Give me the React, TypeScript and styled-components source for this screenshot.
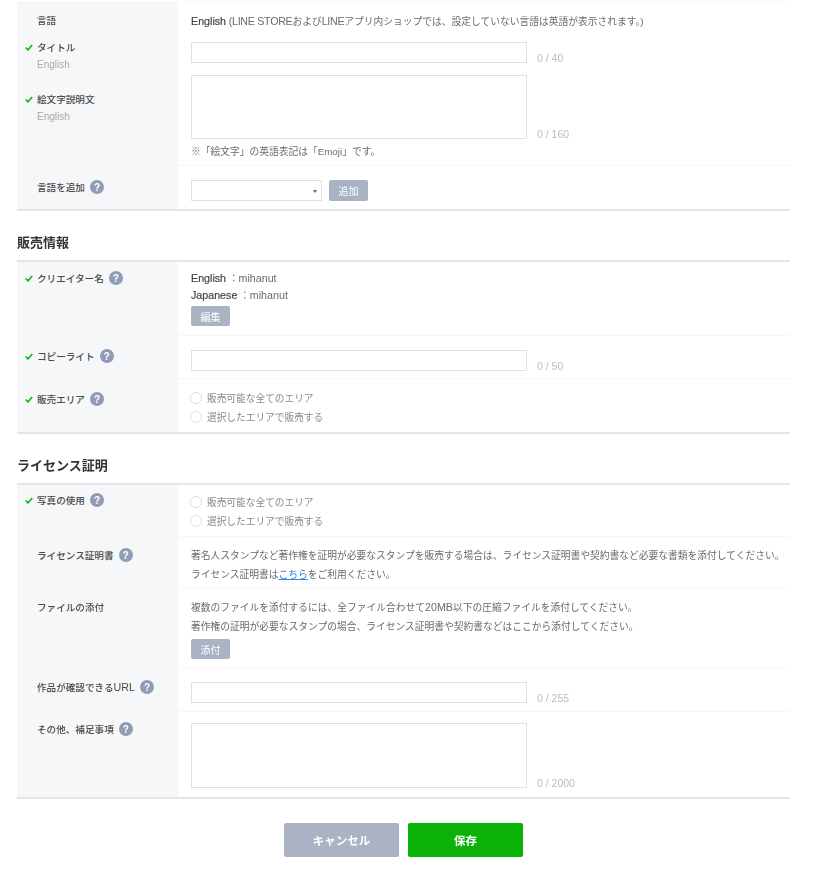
import React from "react";
import styled, { createGlobalStyle } from "styled-components";

const Global = createGlobalStyle`
  html, body { margin: 0; padding: 0; background: #fff; }
  body { font-family: "Liberation Sans", "Noto Sans CJK JP", sans-serif; font-size: 10px; color: #555; }
`;

const Page = styled.div`
  width: 773px;
  margin-left: 17px;
  padding-top: 1px;
  filter: blur(0.35px);
`;

const Table = styled.div<{ $top?: boolean }>`
  border-top: ${(p) => (p.$top ? "1px solid #f7f8fa" : "2px solid #e3e5ea")};
  border-bottom: 2px solid #e3e5ea;
`;

const Row = styled.div<{ $h: number; $plain?: boolean }>`
  display: grid;
  grid-template-columns: 161px 1fr;
  height: ${(p) => p.$h}px;
  box-sizing: border-box;
  border-bottom: ${(p) => (p.$plain ? "none" : "1px solid #f6f7f8")};
  &:last-child { border-bottom: none; }
`;

const Label = styled.div<{ $pt: number }>`
  position: relative;
  background: #f6f7f9;
  padding: ${(p) => p.$pt}px 0 0 20px;
`;

const LabelLine = styled.div`
  display: flex;
  align-items: center;
  gap: 5px;
  height: 14px;
  font-size: 9.6px;
  font-weight: 500;
  color: #4a4a4a;
`;

const Sub = styled.div`
  font-size: 10px;
  line-height: 14px;
  margin-top: 4px;
  color: #aaa;
`;

const Check = styled.svg`
  position: absolute;
  left: 8px;
  width: 8px;
  height: 7px;
  margin-top: 4px;
`;

const HelpDot = styled.span`
  display: inline-flex;
  align-items: center;
  justify-content: center;
  width: 14px;
  height: 14px;
  border-radius: 50%;
  background: #909cb5;
  color: #fff;
  font-size: 10px;
  font-weight: 700;
`;

const Content = styled.div<{ $pt: number }>`
  padding: ${(p) => p.$pt}px 0 0 13px;
`;

const FieldLine = styled.div`
  display: flex;
  align-items: flex-end;
  gap: 10px;
`;

const TextInput = styled.div`
  width: 336px;
  height: 21px;
  box-sizing: border-box;
  border: 1px solid #e0e0e0;
  background: #fff;
`;

const TextArea = styled(TextInput)<{ $h: number }>`
  height: ${(p) => p.$h}px;
`;

const Counter = styled.span`
  font-size: 10.5px;
  line-height: 12px;
  color: #bbb;
  margin-bottom: -1px;
`;

const Text = styled.div<{ $lh?: number }>`
  font-size: 9.75px;
  line-height: ${(p) => p.$lh ?? 18}px;
  color: #6a6a6a;
  white-space: nowrap;
`;

const Latin = styled.span`
  font-size: 10.7px;
`;

const TightLatin = styled(Latin)`
  letter-spacing: -0.3px;
`;

const Strong = styled(Latin)`
  color: #444;
  font-weight: 500;
  -webkit-text-stroke: 0.2px #444;
`;

const Note = styled(Text)`
  margin-top: 4px;
`;

const SmallButton = styled.div`
  display: flex;
  align-items: center;
  justify-content: center;
  width: 39px;
  height: 21px;
  border-radius: 2px;
  background: #a9b3c4;
  color: #fff;
  font-size: 10px;
`;

const EditButton = styled(SmallButton)`
  margin-top: 2px;
  height: 20px;
`;

const AttachButton = styled(SmallButton)`
  margin-top: 3px;
  height: 20px;
`;

const AddLine = styled.div`
  display: flex;
  gap: 7px;
`;

const SelectBox = styled.div`
  position: relative;
  width: 131px;
  height: 21px;
  box-sizing: border-box;
  border: 1px solid #e0e0e0;
`;

const Caret = styled.span`
  position: absolute;
  right: 4px;
  top: 9px;
  border-left: 2px solid transparent;
  border-right: 2px solid transparent;
  border-top: 3px solid #667;
`;

const Heading = styled.h2`
  margin: 23px 0 0;
  height: 26px;
  font-size: 13px;
  line-height: 18px;
  font-weight: 700;
  color: #333;
`;

const RadioLine = styled.div`
  display: flex;
  align-items: center;
  gap: 5px;
  height: 19px;
  color: #888;
  font-size: 9.7px;
`;

const RadioDot = styled.span`
  width: 12px;
  height: 12px;
  margin-left: -1px;
  box-sizing: border-box;
  border-radius: 50%;
  border: 1px solid #e0e0e0;
  background: #fff;
`;

const TextLink = styled.a`
  color: #2a86e8;
  text-decoration: underline;
`;

const Actions = styled.div`
  display: flex;
  justify-content: center;
  gap: 9px;
  margin: 24px 0 0;
`;

const ActionButton = styled.div<{ $primary?: boolean }>`
  display: flex;
  align-items: center;
  justify-content: center;
  width: 115px;
  height: 34px;
  border-radius: 2px;
  background: ${(p) => (p.$primary ? "#0bb106" : "#a9b3c4")};
  color: #fff;
  font-size: 11.5px;
  font-weight: 700;
`;

const Tick = () => (
  <Check viewBox="0 0 8 7">
    <path d="M0.8 3.6 L3 5.8 L7.2 1" fill="none" stroke="#17b50f" strokeWidth="1.7" />
  </Check>
);

const Name: React.FC<{ text: React.ReactNode; check?: boolean; help?: boolean }> = ({ text, check, help }) => (
  <>
    {check && <Tick />}
    <LabelLine>
      <span>{text}</span>
      {help && <HelpDot>?</HelpDot>}
    </LabelLine>
  </>
);

const Radios = () => (
  <>
    <RadioLine><RadioDot />販売可能な全てのエリア</RadioLine>
    <RadioLine><RadioDot />選択したエリアで販売する</RadioLine>
  </>
);

export default function App() {
  return (
    <Page>
      <Global />
      <Table $top>
        <Row $h={34} $plain>
          <Label $pt={11}><Name text="言語" /></Label>
          <Content $pt={10}>
            <Text><Strong>English</Strong> <TightLatin>(LINE STORE</TightLatin>および<TightLatin>LINE</TightLatin>アプリ内ショップでは、設定していない言語は英語が表示されます。)</Text>
          </Content>
        </Row>
        <Row $h={35} $plain>
          <Label $pt={4}><Name text="タイトル" check /><Sub>English</Sub></Label>
          <Content $pt={6}>
            <FieldLine><TextInput /><Counter>0 / 40</Counter></FieldLine>
          </Content>
        </Row>
        <Row $h={95}>
          <Label $pt={21}><Name text="絵文字説明文" check /><Sub>English</Sub></Label>
          <Content $pt={4}>
            <FieldLine><TextArea $h={64} /><Counter>0 / 160</Counter></FieldLine>
            <Note>※「絵文字」の英語表記は「Emoji」です。</Note>
          </Content>
        </Row>
        <Row $h={43}>
          <Label $pt={14}><Name text="言語を追加" help /></Label>
          <Content $pt={14}>
            <AddLine>
              <SelectBox><Caret /></SelectBox>
              <SmallButton>追加</SmallButton>
            </AddLine>
          </Content>
        </Row>
      </Table>

      <Heading>販売情報</Heading>
      <Table>
        <Row $h={74}>
          <Label $pt={9}><Name text="クリエイター名" check help /></Label>
          <Content $pt={8}>
            <Text $lh={17}><Strong>English</Strong> ：<Latin>mihanut</Latin></Text>
            <Text $lh={17}><Strong>Japanese</Strong> ：<Latin>mihanut</Latin></Text>
            <EditButton>編集</EditButton>
          </Content>
        </Row>
        <Row $h={43}>
          <Label $pt={13}><Name text="コピーライト" check help /></Label>
          <Content $pt={14}>
            <FieldLine><TextInput /><Counter>0 / 50</Counter></FieldLine>
          </Content>
        </Row>
        <Row $h={53}>
          <Label $pt={13}><Name text="販売エリア" check help /></Label>
          <Content $pt={9}><Radios /></Content>
        </Row>
      </Table>

      <Heading>ライセンス証明</Heading>
      <Table>
        <Row $h={52}>
          <Label $pt={8}><Name text="写真の使用" check help /></Label>
          <Content $pt={7}><Radios /></Content>
        </Row>
        <Row $h={51}>
          <Label $pt={11}><Name text="ライセンス証明書" help /></Label>
          <Content $pt={9}>
            <Text $lh={19}>著名人スタンプなど著作権を証明が必要なスタンプを販売する場合は、ライセンス証明書や契約書など必要な書類を添付してください。</Text>
            <Text $lh={19}>ライセンス証明書は<TextLink>こちら</TextLink>をご利用ください。</Text>
          </Content>
        </Row>
        <Row $h={81}>
          <Label $pt={12}><Name text="ファイルの添付" /></Label>
          <Content $pt={10}>
            <Text $lh={19}>複数のファイルを添付するには、全ファイル合わせて<Latin>20MB</Latin>以下の圧縮ファイルを添付してください。</Text>
            <Text $lh={19}>著作権の証明が必要なスタンプの場合、ライセンス証明書や契約書などはここから添付してください。</Text>
            <AttachButton>添付</AttachButton>
          </Content>
        </Row>
        <Row $h={43}>
          <Label $pt={11}><Name text={<>作品が確認できる<Latin>URL</Latin></>} help /></Label>
          <Content $pt={13}>
            <FieldLine><TextInput /><Counter>0 / 255</Counter></FieldLine>
          </Content>
        </Row>
        <Row $h={85}>
          <Label $pt={10}><Name text="その他、補足事項" help /></Label>
          <Content $pt={11}>
            <FieldLine><TextArea $h={65} /><Counter>0 / 2000</Counter></FieldLine>
          </Content>
        </Row>
      </Table>

      <Actions>
        <ActionButton>キャンセル</ActionButton>
        <ActionButton $primary>保存</ActionButton>
      </Actions>
    </Page>
  );
}
